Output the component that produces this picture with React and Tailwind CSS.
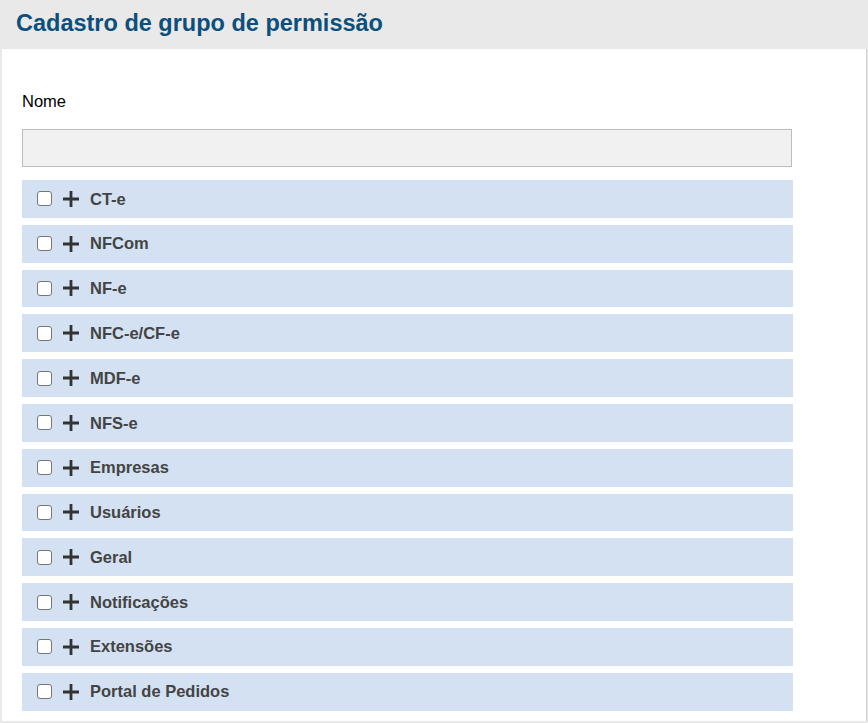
const grupos = [
  'CT-e',
  'NFCom',
  'NF-e',
  'NFC-e/CF-e',
  'MDF-e',
  'NFS-e',
  'Empresas',
  'Usuários',
  'Geral',
  'Notificações',
  'Extensões',
  'Portal de Pedidos',
]

function Plus() {
  return (
    <svg width="18" height="18" viewBox="0 0 18 18" className="shrink-0 block">
      <path d="M9 1v16M1 9h16" stroke="#333" strokeWidth="2.8" />
    </svg>
  )
}

export default function App() {
  return (
    <div className="w-[868px] h-[723px] bg-[#e9e9e9] font-['Liberation_Sans',Arial,sans-serif] flex flex-col">
      <div className="h-[49px] shrink-0 pl-[16px] pt-[8px]">
        <h1 className="text-[23.5px] leading-[30px] font-bold text-[#0d4f7c]">Cadastro de grupo de permissão</h1>
      </div>
      <div className="flex-1 ml-[2px] mr-[1px] mb-[2px] bg-white border-r border-[#d0d0d0] pl-[20px] pt-[43px]">
        <label className="block text-[16.5px] leading-[19px] text-black">Nome</label>
        <input className="block mt-[18px] w-[770px] h-[38px] bg-[#f1f1f1] border border-[#bdbdbd] outline-none" />
        <div className="mt-[13px] flex flex-col gap-[7px] w-[771px]">
          {grupos.map(g => (
            <div key={g} className="h-[37.8px] bg-[#d4e1f2] flex items-center pl-[15px]">
              <span className="w-[15px] h-[15px] min-w-[15px] border border-[#767676] rounded-[3px] bg-white" />
              <span className="ml-[10px]"><Plus /></span>
              <span className="ml-[10px] text-[16.5px] font-bold text-[#444]">{g}</span>
            </div>
          ))}
        </div>
      </div>
    </div>
  )
}
